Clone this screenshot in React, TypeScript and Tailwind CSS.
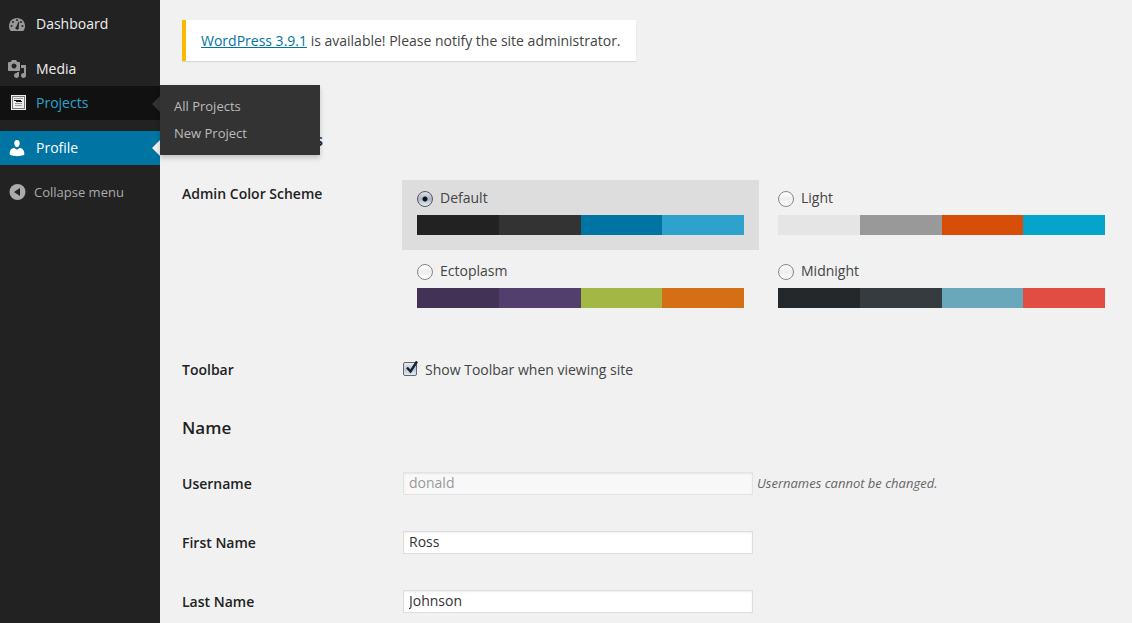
import { useState } from 'react'
import type { ReactNode } from 'react'
import clsx from 'clsx'

const schemes = [
  { id: 'default', name: 'Default', colors: ['#222222', '#333333', '#0074a2', '#2ea2cc'] },
  { id: 'light', name: 'Light', colors: ['#e5e5e5', '#999999', '#d64e07', '#04a4cc'] },
  { id: 'ectoplasm', name: 'Ectoplasm', colors: ['#413256', '#523f6d', '#a3b745', '#d46f15'] },
  { id: 'midnight', name: 'Midnight', colors: ['#25282b', '#363b3f', '#69a8bb', '#e14d43'] },
]

function DashboardIcon() {
  return (
    <svg viewBox="0 0 20 20" className="h-5 w-5 shrink-0" aria-hidden="true">
      <path
        fill="#999"
        d="M3.76 17h12.48C17.34 15.63 18 13.9 18 12c0-4.41-3.58-8-8-8s-8 3.59-8 8c0 1.9.66 3.63 1.76 5z"
      />
      <g fill="#222">
        <circle cx="10" cy="6" r="1" />
        <circle cx="6" cy="8" r="1" />
        <circle cx="14" cy="8" r="1" />
        <circle cx="4.5" cy="12" r="1" />
        <circle cx="15.5" cy="12" r="1" />
        <path d="M11.6 7.4l.7.3-.6 5.5c.2.4.3.8.1 1.3-.3.9-1.3 1.4-2.2 1.1-.9-.3-1.4-1.3-1.1-2.2.2-.5.5-.8.9-1z" />
      </g>
    </svg>
  )
}

function MediaIcon() {
  return (
    <svg viewBox="0 0 20 20" fill="#999" className="h-5 w-5 shrink-0" aria-hidden="true">
      <path d="M13 11V4c0-.55-.45-1-1-1h-1.67L9 1H5L3.67 3H2c-.55 0-1 .45-1 1v7c0 .55.45 1 1 1h10c.55 0 1-.45 1-1zM7 4.5c1.38 0 2.5 1.12 2.5 2.5S8.38 9.5 7 9.5 4.5 8.38 4.5 7 5.62 4.5 7 4.5zM14 6h5v10.500c0 1.38-1.12 2.5-2.5 2.5S14 17.88 14 16.5s1.12-2.5 2.5-2.5c.17 0 .34.02.5.05V9h-3V6zm-4 8.05V13h2v3.5c0 1.38-1.12 2.5-2.5 2.5S7 17.88 7 16.5 8.12 14 9.5 14c.17 0 .34.02.5.05z" />
    </svg>
  )
}

function ProjectsIcon() {
  return (
    <svg viewBox="0 0 20 20" className="h-5 w-5 shrink-0" shapeRendering="crispEdges" aria-hidden="true">
      <path fill="#eee" d="M4 2h15v15H4z" />
      <path fill="#777" d="M5 3h13v13H5z" />
      <path fill="#eee" d="M6 4h11v11H6z" />
      <path fill="#999" d="M7 5h9v1H7zM8 10h7v1H8zM8 12h7v1H8z" />
      <path fill="#111" d="M7 7h7v1H7zM9 8h6v1H9z" />
    </svg>
  )
}

function ProfileIcon() {
  return (
    <svg viewBox="0 0 20 20" fill="#fff" className="h-5 w-5 shrink-0" aria-hidden="true">
      <path d="M10 9.25c-2.27 0-2.73-3.44-2.73-3.44C7 4.02 7.82 2 9.97 2c2.16 0 2.98 2.02 2.71 3.81 0 0-.41 3.44-2.68 3.44zm0 2.57L12.72 10c2.39 0 4.52 2.33 4.52 4.53v2.49s-3.65 1.13-7.24 1.13c-3.65 0-7.24-1.13-7.24-1.13v-2.49c0-2.25 1.94-4.48 4.47-4.48z" />
    </svg>
  )
}

function CollapseIcon() {
  return (
    <svg viewBox="0 0 20 20" className="h-5 w-5 shrink-0" aria-hidden="true">
      <circle cx="10.500" cy="10" r="8" fill="#aaa" />
      <path fill="#222" d="M13 6v8l-6-4z" />
    </svg>
  )
}

function MenuItem({ icon, label, className, children }: {
  icon: ReactNode
  label: string
  className?: string
  children?: ReactNode
}) {
  return (
    <li className={clsx('relative', className)}>
      <a href="#" className="flex h-[34px] items-center gap-[9px] pl-[7px]">
        {icon}
        {label}
      </a>
      {children}
    </li>
  )
}

function Sidebar() {
  return (
    <nav className="w-40 shrink-0 bg-[#222] pt-[7px] text-[#eee]">
      <ul className="font-medium">
        <MenuItem icon={<DashboardIcon />} label="Dashboard" className="mb-[11px]" />
        <MenuItem icon={<MediaIcon />} label="Media" />
        <MenuItem icon={<ProjectsIcon />} label="Projects" className="z-10 mb-[11px] bg-[#111] text-[#2ea2cc]">
          <span className="absolute top-[10px] right-0 border-8 border-l-0 border-transparent border-r-[#333]" />
          <ul className="absolute -top-px left-full w-40 bg-[#333] py-2 text-[13px] font-normal text-[#bbb] shadow-[0_3px_5px_rgba(0,0,0,0.2)]">
            <li>
              <a href="#" className="block px-[14px] leading-[27px]">All Projects</a>
            </li>
            <li>
              <a href="#" className="block px-[14px] leading-[27px]">New Project</a>
            </li>
          </ul>
        </MenuItem>
        <MenuItem icon={<ProfileIcon />} label="Profile" className="bg-[#0074a2] text-white">
          <span className="absolute top-[9px] right-0 border-8 border-l-0 border-transparent border-r-[#f1f1f1]" />
        </MenuItem>
      </ul>
      <button type="button" className="mt-[10px] flex h-[34px] items-center gap-[7px] pl-[7px] text-[13px] text-[#aaa]">
        <CollapseIcon />
        Collapse menu
      </button>
    </nav>
  )
}

function SchemeOption({ scheme, checked, onSelect }: {
  scheme: (typeof schemes)[number]
  checked: boolean
  onSelect: () => void
}) {
  return (
    <label className={clsx('block px-[15px] pt-2 pb-[15px]', checked && 'bg-[#ddd]')}>
      <span className="flex items-center gap-[7px]">
        <input
          type="radio"
          name="admin_color"
          checked={checked}
          onChange={onSelect}
          className="mt-[2px] h-4 w-4 appearance-none rounded-full border border-[#888] bg-linear-to-b from-white via-[#eee] to-white checked:border-[#556] checked:bg-[radial-gradient(circle,#111_2px,transparent_3px),linear-gradient(#dde3ea,#a9b6c6,#e4eff8)]"
        />
        {scheme.name}
      </span>
      <span className="mt-[7px] grid h-5 grid-cols-4">
        {scheme.colors.map((color) => (
          <span key={color} style={{ backgroundColor: color }} />
        ))}
      </span>
    </label>
  )
}

function TextRow({ id, label, value, disabled, note }: {
  id: string
  label: string
  value: string
  disabled?: boolean
  note?: string
}) {
  return (
    <div className="flex items-center">
      <label htmlFor={id} className="w-[221px] shrink-0 font-semibold text-[#222]">
        {label}
      </label>
      <input
        id={id}
        type="text"
        defaultValue={value}
        disabled={disabled}
        className="h-[23px] w-[350px] border border-[#ddd] bg-white px-[5px] pb-[2px] text-[#333] shadow-[inset_0_1px_2px_rgba(0,0,0,0.07)] disabled:border-[#e3e3e3] disabled:bg-[#f8f8f8] disabled:text-[#999]"
      />
      {note && <span className="ml-1 text-[13px] text-[#666] italic">{note}</span>}
    </div>
  )
}

export default function App() {
  const [selected, setSelected] = useState('default')

  return (
    <div className="flex min-h-screen bg-[#f1f1f1] font-['Open_Sans',sans-serif] text-sm text-[#444]">
      <Sidebar />
      <main className="min-w-0 flex-1 pt-5 pr-3 pb-[10px] pl-[22px]">
        <div className="w-fit border-l-4 border-[#ffba00] bg-white px-[15px] py-[10px] leading-[21px] shadow-[0_1px_1px_rgba(0,0,0,0.1)]">
          <a href="#" className="text-[#0074a2] underline">WordPress 3.9.1</a> is available! Please notify the site
          administrator.
        </div>

        <form>
          <h3 className="mt-[67px] text-[17px] leading-6 font-semibold text-[#222]">Personal Options</h3>

          <fieldset className="mt-7 flex">
            <legend className="float-left w-[220px] shrink-0 pt-1 font-semibold text-[#222]">Admin Color Scheme</legend>
            <div className="grid flex-1 grid-cols-2 gap-x-1 gap-y-[3px]">
              {schemes.map((scheme) => (
                <SchemeOption
                  key={scheme.id}
                  scheme={scheme}
                  checked={selected === scheme.id}
                  onSelect={() => setSelected(scheme.id)}
                />
              ))}
            </div>
          </fieldset>

          <div className="mt-[37px] flex">
            <span className="w-[221px] shrink-0 font-semibold text-[#222]">Toolbar</span>
            <label className="flex items-center gap-2">
              <span className="relative mb-[2px] flex">
                <input
                  type="checkbox"
                  defaultChecked
                  className="peer h-[14px] w-[14px] appearance-none rounded-[2px] border border-[#667] bg-linear-to-b from-[#e8ecf2] via-[#bcc8d6] to-[#e0eaf3]"
                />
                <svg
                  viewBox="0 0 14 14"
                  className="pointer-events-none absolute bottom-[2px] left-[2px] hidden h-[14px] w-[14px] peer-checked:block"
                  aria-hidden="true"
                >
                  <path d="M2 7.500l3.500 4L12 1.500" fill="none" stroke="#1a2430" strokeWidth="2.400" />
                </svg>
              </span>
              Show Toolbar when viewing site
            </label>
          </div>

          <h3 className="mt-9 text-[17px] leading-6 font-semibold text-[#222]">Name</h3>

          <div className="mt-8 flex flex-col gap-9">
            <TextRow id="user_login" label="Username" value="donald" disabled note="Usernames cannot be changed." />
            <TextRow id="first_name" label="First Name" value="Ross" />
            <TextRow id="last_name" label="Last Name" value="Johnson" />
          </div>
        </form>
      </main>
    </div>
  )
}
